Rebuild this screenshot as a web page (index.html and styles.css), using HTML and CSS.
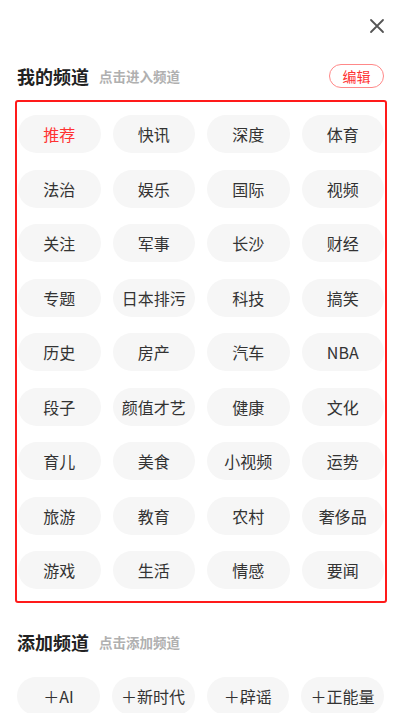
FILE: index.html
```html
<!DOCTYPE html>
<html lang="zh">
<head>
<meta charset="utf-8">
<title>频道管理</title>
<link rel="stylesheet" href="styles.css">
</head>
<body>
<div class="panel">
  <div class="top">
    <svg class="close" width="16" height="16" viewBox="0 0 16 16"><path d="M2 2L14 14M14 2L2 14" stroke="#555" stroke-width="1.8" stroke-linecap="round" fill="none"/></svg>
  </div>
  <div class="section-head">
    <div class="titles"><span class="title">我的频道</span><span class="sub">点击进入频道</span></div>
    <div class="edit">编辑</div>
  </div>
  <div class="grid mine">
    <div class="chip active">推荐</div><div class="chip">快讯</div><div class="chip">深度</div><div class="chip">体育</div>
    <div class="chip">法治</div><div class="chip">娱乐</div><div class="chip">国际</div><div class="chip">视频</div>
    <div class="chip">关注</div><div class="chip">军事</div><div class="chip">长沙</div><div class="chip">财经</div>
    <div class="chip">专题</div><div class="chip">日本排污</div><div class="chip">科技</div><div class="chip">搞笑</div>
    <div class="chip">历史</div><div class="chip">房产</div><div class="chip">汽车</div><div class="chip">NBA</div>
    <div class="chip">段子</div><div class="chip">颜值才艺</div><div class="chip">健康</div><div class="chip">文化</div>
    <div class="chip">育儿</div><div class="chip">美食</div><div class="chip">小视频</div><div class="chip">运势</div>
    <div class="chip">旅游</div><div class="chip">教育</div><div class="chip">农村</div><div class="chip">奢侈品</div>
    <div class="chip">游戏</div><div class="chip">生活</div><div class="chip">情感</div><div class="chip">要闻</div>
  </div>
  <div class="section-head add-head">
    <div class="titles"><span class="title">添加频道</span><span class="sub">点击添加频道</span></div>
  </div>
  <div class="grid more">
    <div class="chip">＋AI</div><div class="chip">＋新时代</div><div class="chip">＋辟谣</div><div class="chip">＋正能量</div>
  </div>
</div>
</body>
</html>
```

FILE: styles.css
```css
* { box-sizing: border-box; }
html, body { margin: 0; padding: 0; background: #fff; }
body {
  font-family: "Noto Sans CJK SC", "Noto Sans", sans-serif;
  color: #333;
  width: 401px;
  height: 713px;
  overflow: hidden;
}
.panel { width: 401px; }
.top {
  height: 51px;
  display: flex;
  justify-content: flex-end;
  align-items: center;
  padding: 0 16px;
}
.close { display: block; }
.section-head {
  margin-top: 13px;
  height: 24px;
  padding: 0 17px;
  display: flex;
  align-items: center;
  justify-content: space-between;
}
.titles { display: flex; align-items: center; }
.title {
  font-size: 18px;
  font-weight: 700;
  color: #222;
  line-height: 24px;
}
.sub {
  font-size: 13.5px;
  font-weight: 700;
  color: #b0b0b0;
  margin-left: 10px;
  line-height: 24px;
}
.edit {
  width: 55px;
  height: 24px;
  border: 0.5px solid #f88;
  border-radius: 12px;
  color: #f33;
  font-size: 14px;
  display: flex;
  align-items: center;
  justify-content: center;
}
.grid {
  display: grid;
  grid-template-columns: repeat(4, 1fr);
  column-gap: 12px;
  row-gap: 16.5px;
}
.mine {
  margin: 12px 14px 0 15px;
  border: 2px solid #ff1a1a;
  border-radius: 3px;
  padding: 13px 1px 12px 1px;
}
.chip {
  height: 38px;
  border-radius: 19px;
  background: #f6f6f6;
  display: flex;
  align-items: center;
  justify-content: center;
  font-size: 16px;
  color: #333;
  white-space: nowrap;
}
.chip.active { color: #f33; }
.add-head { margin-top: 27px; }
.more { margin: 23px 17px 0 17px; }
```
